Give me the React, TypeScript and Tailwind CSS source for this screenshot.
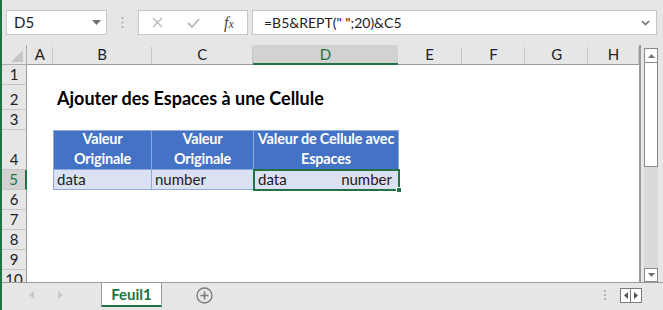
import React from 'react';

const columns = [
  { key: 'A', w: 'w-[26px]' },
  { key: 'B', w: 'w-[99px]' },
  { key: 'C', w: 'w-[102px]' },
  { key: 'D', w: 'w-[145px]' },
  { key: 'E', w: 'w-[64px]' },
  { key: 'F', w: 'w-[64px]' },
  { key: 'G', w: 'w-[63px]' },
  { key: 'H', w: 'w-[51px]' },
];

const rows = [
  { n: 1, h: 'h-[20px]' },
  { n: 2, h: 'h-[25px]' },
  { n: 3, h: 'h-[20px]' },
  { n: 4, h: 'h-[40px]' },
  { n: 5, h: 'h-[20px]' },
  { n: 6, h: 'h-[20px]' },
  { n: 7, h: 'h-[20px]' },
  { n: 8, h: 'h-[20px]' },
  { n: 9, h: 'h-[20px]' },
  { n: 10, h: 'h-[20px]' },
];

const FormulaBar: React.FC = () => (
  <div className="h-[45px] flex items-start pt-[10px] pl-[4px] text-[15px] text-[#222]">
    {/* Name box */}
    <div className="w-[101px] h-[25px] bg-white border border-[#c6c6c6] flex items-center justify-between pl-[7px] pr-[5px]">
      <span>D5</span>
      <svg width="9" height="5" viewBox="0 0 9 5">
        <path d="M0 0h9L4.5 5z" fill="#707070" />
      </svg>
    </div>
    <div className="w-[31px] h-[25px] flex items-center justify-center">
      <svg width="3" height="11" viewBox="0 0 3 11">
        <rect x="0.5" y="0" width="2" height="2" fill="#b4b4b4" />
        <rect x="0.5" y="4.5" width="2" height="2" fill="#b4b4b4" />
        <rect x="0.5" y="9" width="2" height="2" fill="#b4b4b4" />
      </svg>
    </div>
    {/* Cancel / enter / fx */}
    <div className="w-[110px] h-[25px] bg-white border border-[#c6c6c6] flex items-center">
      <svg className="ml-[13px]" width="11" height="11" viewBox="0 0 11 11">
        <path d="M1 1l9 9M10 1l-9 9" stroke="#b8b8b8" strokeWidth="1.4" />
      </svg>
      <svg className="ml-[24px]" width="13" height="10" viewBox="0 0 13 10">
        <path d="M1 5l4 4 7-8" stroke="#b8b8b8" strokeWidth="1.8" fill="none" />
      </svg>
      <span className="ml-[24px] font-['Liberation_Serif',serif] italic text-[16px] text-[#444] leading-none">
        f<span className="text-[12px]">x</span>
      </span>
    </div>
    {/* Formula input */}
    <div className="ml-[4px] w-[405px] h-[25px] bg-white border border-[#c6c6c6] flex items-center justify-between pl-[11px] pr-[6px]">
      <span className="whitespace-pre text-[14px]">=B5&amp;REPT(" ";20)&amp;C5</span>
      <svg width="9" height="6" viewBox="0 0 9 6">
        <path d="M1 1l3.5 3.5L8 1" stroke="#707070" strokeWidth="1.6" fill="none" />
      </svg>
    </div>
  </div>
);

const ColumnHeaders: React.FC = () => (
  <div className="flex h-[20px] shrink-0">
    <div className="w-[25px] h-full bg-[#e6e6e6] border-r border-b border-[#ababab] flex items-end justify-end pr-[3px] pb-[2px]">
      <svg width="12" height="12" viewBox="0 0 12 12">
        <path d="M12 0v12H0z" fill="#c6c6c6" />
      </svg>
    </div>
    {columns.map((c) =>
      c.key === 'D' ? (
        <div
          key={c.key}
          className={`${c.w} h-full bg-[#d2d2d2] border-b-2 border-b-[#217346] flex items-center justify-center text-[#217346]`}
        >
          {c.key}
        </div>
      ) : (
        <div
          key={c.key}
          className={`${c.w} h-full bg-[#e6e6e6] border-b border-[#9b9b9b] flex items-center justify-center relative`}
        >
          {c.key}
          <span className="absolute right-0 top-[2px] bottom-0 w-px bg-[#c6c6c6]" />
        </div>
      )
    )}
  </div>
);

const RowHeader: React.FC<{ n: number }> = ({ n }) =>
  n === 5 ? (
    <div className="w-[25px] h-full bg-[#d2d2d2] border-r-2 border-r-[#217346] border-b border-b-[#c6c6c6] flex items-end justify-center pb-[1px] leading-[18px] text-[#217346]">
      {n}
    </div>
  ) : (
    <div className="w-[25px] h-full bg-[#e6e6e6] border-r border-r-[#9b9b9b] border-b border-b-[#c6c6c6] flex items-end justify-center pb-[1px] leading-[18px]">
      {n}
    </div>
  );

const HeaderCell: React.FC<{ w: string; first?: boolean; children: React.ReactNode }> = ({ w, first, children }) => (
  <div
    className={`${w} h-full bg-[#4472c4] border-t border-r border-b border-[#8ea9db] ${first ? 'border-l' : ''} flex items-end justify-center text-white font-bold text-[14.5px] tracking-[-0.2px] text-center leading-[20px] whitespace-nowrap`}
  >
    <div>{children}</div>
  </div>
);

const DataCell: React.FC<{ w: string; first?: boolean; children: React.ReactNode }> = ({ w, first, children }) => (
  <div
    className={`${w} h-full bg-[#d9e1f2] border-r border-b border-[#8ea9db] ${first ? 'border-l' : ''} flex items-end pl-[3px] pr-[5px] leading-[19px]`}
  >
    {children}
  </div>
);

const Empty: React.FC<{ w: string }> = ({ w }) => <div className={`${w} h-full`} />;

const SheetRow: React.FC<{ n: number; h: string }> = ({ n, h }) => {
  let cells: React.ReactNode;
  if (n === 2) {
    cells = (
      <>
        <Empty w="w-[26px]" />
        <div className="w-[99px] h-full flex items-end pl-[4px] pb-[1px] overflow-visible">
          <span className="whitespace-nowrap font-bold text-[18px] leading-[22px] text-black">
            Ajouter des Espaces à une Cellule
          </span>
        </div>
      </>
    );
  } else if (n === 4) {
    cells = (
      <>
        <Empty w="w-[26px]" />
        <HeaderCell w="w-[99px]" first>
          Valeur
          <br />
          Originale
        </HeaderCell>
        <HeaderCell w="w-[102px]">
          Valeur
          <br />
          Originale
        </HeaderCell>
        <HeaderCell w="w-[145px]">
          Valeur de Cellule avec
          <br />
          Espaces
        </HeaderCell>
      </>
    );
  } else if (n === 5) {
    cells = (
      <>
        <Empty w="w-[26px]" />
        <DataCell w="w-[99px]" first>
          data
        </DataCell>
        <DataCell w="w-[102px]">number</DataCell>
        <div className="w-[145px] h-full relative">
          <div className="h-full bg-[#d9e1f2] border-r border-b border-[#8ea9db] flex items-end justify-between pl-[4px] pr-[6px] leading-[19px]">
            <span>data</span>
            <span>number</span>
          </div>
          <div className="absolute -left-px -top-px -right-px -bottom-px border-2 border-[#217346]" />
          <div className="absolute -right-[3px] -bottom-[3px] w-[6px] h-[6px] bg-[#217346] border border-white" />
        </div>
      </>
    );
  }
  return (
    <div className={`flex ${h} shrink-0`}>
      <RowHeader n={n} />
      <div className="flex flex-1 bg-white h-full">{cells}</div>
    </div>
  );
};

const ScrollBar: React.FC = () => (
  <div className="w-[21px] h-full bg-[#e6e6e6] flex flex-col pt-[3px] pl-[3px] pr-[4px]">
    <div className="h-[15px] bg-white border border-[#8a8a8a] flex items-center justify-center">
      <svg width="7" height="4" viewBox="0 0 7 4">
        <path d="M0 4L3.5 0 7 4z" fill="#707070" />
      </svg>
    </div>
    <div className="h-[104px] bg-white border border-t-0 border-[#8a8a8a]" />
    <div className="flex-1 bg-[#dadada]" />
    <div className="h-[14px] bg-white border border-[#8a8a8a] flex items-center justify-center">
      <svg width="7" height="4" viewBox="0 0 7 4">
        <path d="M0 0h7L3.5 4z" fill="#707070" />
      </svg>
    </div>
  </div>
);

const TabBar: React.FC = () => (
  <div className="h-[27px] bg-[#e6e6e6] flex items-start border-t border-[#9b9b9b]">
    <div className="w-[99px] h-[24px] flex items-center">
      <svg className="ml-[27px]" width="5" height="8" viewBox="0 0 5 8">
        <path d="M5 0v8L0 4z" fill="#c8c8c8" />
      </svg>
      <svg className="ml-[24px]" width="5" height="8" viewBox="0 0 5 8">
        <path d="M0 0v8l5-4z" fill="#c8c8c8" />
      </svg>
    </div>
    <div className="w-[61px] h-[24px] bg-white border-l border-r border-[#9b9b9b] border-b-2 border-b-[#217346] flex items-center justify-center font-bold text-[15px] text-[#217346]">
      Feuil1
    </div>
    <div className="ml-[34px] h-[24px] flex items-center">
      <svg width="17" height="17" viewBox="0 0 17 17">
        <circle cx="8.5" cy="8.5" r="7.5" stroke="#7a7a7a" strokeWidth="1.3" fill="none" />
        <path d="M8.5 4.5v8M4.5 8.5h8" stroke="#7a7a7a" strokeWidth="1.6" />
      </svg>
    </div>
    <div className="ml-auto mr-[21px] h-[24px] flex items-center">
      <svg className="mr-[14px]" width="2" height="10" viewBox="0 0 2 10">
        <rect y="0" width="2" height="2" fill="#b4b4b4" />
        <rect y="4" width="2" height="2" fill="#b4b4b4" />
        <rect y="8" width="2" height="2" fill="#b4b4b4" />
      </svg>
      <div className="w-[11px] h-[15px] bg-white border border-[#7a7a7a] flex items-center justify-center">
        <svg width="4" height="7" viewBox="0 0 4 7">
          <path d="M4 0v7L0 3.5z" fill="#555" />
        </svg>
      </div>
      <div className="w-[11px] h-[15px] bg-white border border-l-0 border-[#7a7a7a] flex items-center justify-center">
        <svg width="4" height="7" viewBox="0 0 4 7">
          <path d="M0 0v7l4-3.5z" fill="#555" />
        </svg>
      </div>
    </div>
  </div>
);

export default function App() {
  return (
    <div className="w-[663px] h-[310px] overflow-hidden bg-[#e6e6e6] border-l-2 border-[#217346] flex flex-col font-['Lato',sans-serif] text-[15px] text-[#222]">
      <FormulaBar />
      <div className="h-[237px] flex">
        <div className="w-[639px] h-full flex flex-col overflow-hidden border-r-2 border-[#9b9b9b] bg-white">
          <ColumnHeaders />
          {rows.map((r) => (
            <SheetRow key={r.n} n={r.n} h={r.h} />
          ))}
        </div>
        <ScrollBar />
      </div>
      <TabBar />
    </div>
  );
}
